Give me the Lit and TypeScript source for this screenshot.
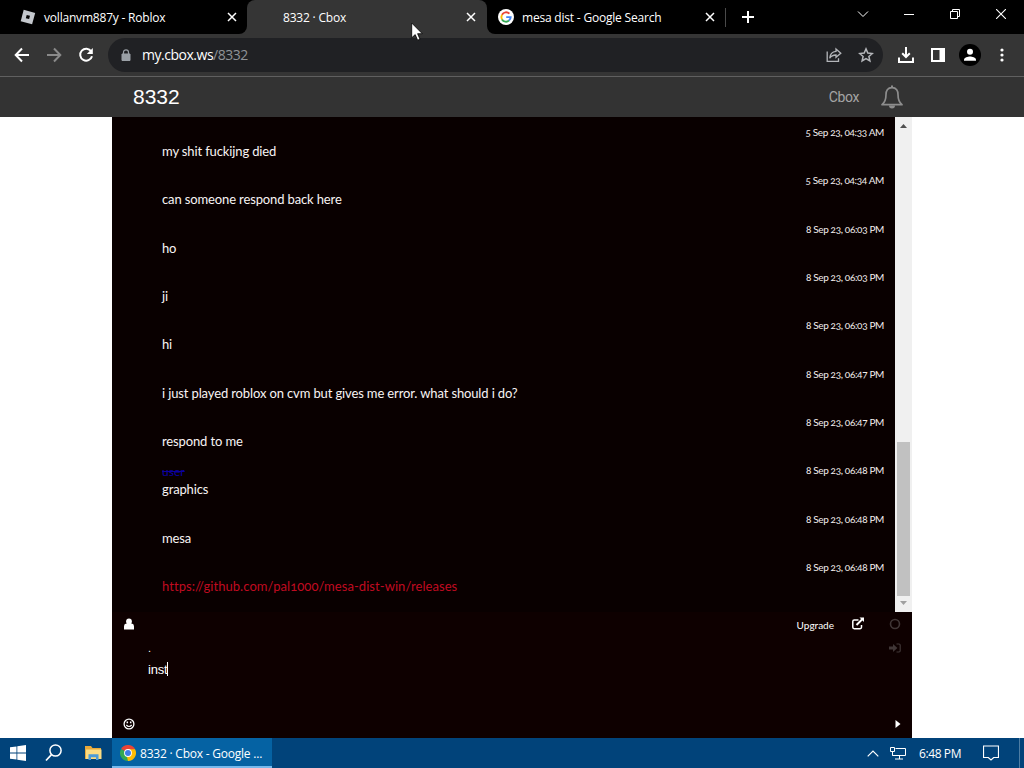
import { LitElement, html, svg, css } from 'lit';

type MessageType = {
  date: string
  text: string
  name?: string
  link?: boolean
}

const messages: MessageType[] = [
  { date: '5 Sep 23, 04:33 AM', text: 'my shit fuckijng died' },
  { date: '5 Sep 23, 04:34 AM', text: 'can someone respond back here' },
  { date: '8 Sep 23, 06:03 PM', text: 'ho' },
  { date: '8 Sep 23, 06:03 PM', text: 'ji' },
  { date: '8 Sep 23, 06:03 PM', text: 'hi' },
  { date: '8 Sep 23, 06:47 PM', text: 'i just played roblox on cvm but gives me error. what should i do?' },
  { date: '8 Sep 23, 06:47 PM', text: 'respond to me' },
  { date: '8 Sep 23, 06:48 PM', text: 'graphics', name: 'user' },
  { date: '8 Sep 23, 06:48 PM', text: 'mesa' },
  { date: '8 Sep 23, 06:48 PM', text: 'https://github.com/pal1000/mesa-dist-win/releases', link: true },
]

const icon = (w: number, h: number, body: any) => html`
  <svg width="${w}" height="${h}" viewBox="0 0 ${w} ${h}" fill="none" stroke="currentColor">${body}</svg>`

const icons = {
  close: () => icon(10, 10, svg`<path d="M1 1l8 8M9 1l-8 8" stroke-width="1.5"/>`),
  plus: () => icon(12, 12, svg`<path d="M6 0v12M0 6h12" stroke-width="2"/>`),
  chevron: () => icon(12, 8, svg`<path d="M1 1.5l5 5 5-5"/>`),
  minimize: () => icon(10, 10, svg`<path d="M0 5.5h10"/>`),
  restore: () => icon(10, 10, svg`<path d="M.5 2.5h7v7h-7zM2.5 2.5v-2h7v7h-2"/>`),
  exit: () => icon(10, 10, svg`<path d="M0 0l10 10M10 0L0 10" stroke-width="1.1"/>`),
  roblox: () => icon(16, 16, svg`
    <path d="M3.7 .8L15.2 3.9 12.1 15.3 .7 12.2z" fill="#c4c8cd" stroke="none"/>
    <path d="M6.7 5.9l3.3.9-.9 3.3-3.3-.9z" fill="#050505" stroke="none"/>`),
  google: () => icon(16, 16, svg`
    <circle cx="8" cy="8" r="8" fill="#fff" stroke="none"/>
    <path d="M4 5.7A4.7 4.7 0 0 1 11.4 4.7" stroke="#ea4335" stroke-width="1.9"/>
    <path d="M4 5.7A4.7 4.7 0 0 0 4 10.4" stroke="#fbbc05" stroke-width="1.9"/>
    <path d="M4 10.4A4.7 4.7 0 0 0 11 11.6" stroke="#34a853" stroke-width="1.9"/>
    <path d="M8.2 8.1h4.5A4.7 4.7 0 0 1 11 11.6" stroke="#4285f4" stroke-width="1.9"/>`),
  back: () => icon(16, 16, svg`<path d="M15 8H2M8 1.5L1.7 8 8 14.5" stroke-width="2"/>`),
  forward: () => icon(16, 16, svg`<path d="M1 8h13M8 1.5L14.3 8 8 14.5" stroke-width="2"/>`),
  reload: () => icon(16, 16, svg`
    <path d="M13.2 4.3A6 6 0 1 0 14 9.2" stroke-width="2"/>
    <path d="M14.8 1v6H8.8z" fill="currentColor" stroke="none"/>`),
  lock: () => icon(10, 12, svg`
    <path d="M1 5h8v6.5H1z" fill="currentColor"/>
    <path d="M2.5 5V3.3a2.5 2.5 0 0 1 5 0V5" stroke-width="1.2"/>`),
  share: () => icon(16, 16, svg`
    <path d="M1.2 4.5v9.8h11.3v-3" stroke-width="1.3"/>
    <path d="M10 2l4.8 4.2L10 10.3V8C7 8 5 9 3.7 11.2 4 7.5 6 4.7 10 4.3z" stroke-width="1.3"/>`),
  star: () => icon(16, 16, svg`<path d="M8 1.9l1.8 4.2 4.6.4-3.5 3 1 4.5L8 11.6 4.1 14l1-4.5-3.5-3 4.6-.4z" stroke-width="1.5"/>`),
  download: () => icon(16, 16, svg`
    <path d="M8 0v10M4.2 6.2L8 10l3.8-3.8" stroke-width="2"/>
    <path d="M1 10.5V15h14v-4.5" stroke-width="2"/>`),
  panel: () => icon(14, 14, svg`
    <path d="M1 1h12v12H1z" stroke-width="2"/>
    <path d="M8.5 0H14v14H8.5z" fill="currentColor" stroke="none"/>`),
  avatar: () => icon(22, 22, svg`
    <circle cx="11" cy="11" r="11" fill="#000" stroke="none"/>
    <circle cx="11" cy="7.8" r="3" fill="#fff" stroke="none"/>
    <path d="M5 16.8v-1.3c0-2 4-3.1 6-3.1s6 1.1 6 3.1v1.3z" fill="#fff" stroke="none"/>`),
  dots: () => icon(4, 14, svg`
    <g fill="currentColor" stroke="none"><circle cx="2" cy="2" r="1.6"/><circle cx="2" cy="7" r="1.6"/><circle cx="2" cy="12" r="1.6"/></g>`),
  bell: () => icon(24, 24, svg`
    <path d="M12 2.6C7.5 2.6 6 6 6 9.5c0 5-1.2 8-4 10.2h20c-2.8-2.2-4-5.2-4-10.2C18 6 16.5 2.6 12 2.6z" stroke-width="1.7" stroke-linejoin="round"/>
    <path d="M12 .5v2" stroke-width="2"/>
    <path d="M9 20.5a3 3 0 0 0 6 0z" fill="currentColor" stroke="none"/>`),
  user: () => icon(12, 12, svg`
    <path d="M1 11.5V8.2Q1 5.8 3.4 5.6h5.2Q11 5.8 11 8.2v3.3z" fill="currentColor" stroke="none"/>
    <circle cx="6" cy="3.4" r="2.9" fill="currentColor" stroke="none"/>`),
  external: () => icon(14, 13, svg`
    <path d="M7.5 3H3.2Q1.8 3 1.8 4.4v5.9q0 1.4 1.4 1.4h5.9q1.4 0 1.4-1.4V8" stroke-width="1.5"/>
    <path d="M5.5 8L11.5 2" stroke-width="1.9"/>
    <path d="M8.5 .5H13V5z" fill="currentColor" stroke="none"/>`),
  circle: () => icon(12, 12, svg`<circle cx="6" cy="6" r="4.5" stroke-width="1.6"/>`),
  enter: () => icon(12, 10, svg`
    <path d="M0 3.4h4V1l4.4 4L4 9V6.6H0z" fill="currentColor" stroke="none"/>
    <path d="M7.5 1H10q1.2 0 1.2 1.2v5.6Q11.2 9 10 9H7.5" stroke-width="1.2"/>`),
  smile: () => icon(12, 12, svg`
    <circle cx="6" cy="6" r="4.9" stroke-width="1.3"/>
    <path d="M3.3 7q2.7 3 5.4 0" stroke-width="1.2"/>
    <path d="M4.3 3.5v1.8M7.7 3.5v1.8" stroke-width="1.5"/>`),
  play: () => icon(6, 8, svg`<path d="M.5 0l5 4-5 4z" fill="currentColor" stroke="none"/>`),
  up: () => icon(7, 4, svg`<path d="M0 4l3.5-4L7 4z" fill="currentColor" stroke="none"/>`),
  down: () => icon(7, 4, svg`<path d="M0 0l3.5 4L7 0z" fill="currentColor" stroke="none"/>`),
  windows: () => icon(16, 16, svg`
    <path d="M0 2.3l6.5-.9v6.1H0zM7.3 1.3L16 0v7.5H7.3zM0 8.4h6.5v6.2L0 13.7zM7.3 8.4H16V16l-8.7-1.2z" fill="currentColor" stroke="none"/>`),
  search: () => icon(18, 18, svg`
    <circle cx="10.5" cy="6.5" r="5.6" stroke-width="1.5"/>
    <path d="M6.5 10.7L1 16.5" stroke-width="1.7"/>`),
  explorer: () => icon(17, 14, svg`
    <g stroke="none">
      <path d="M0 0h6l1.5 2H16v11H0z" fill="#e9a93a"/>
      <path d="M1 3.5h15.5V13H1z" fill="#fbdc82"/>
      <path d="M3.5 14V8.3h10V14H11v-2.8H6V14z" fill="#4b9bd8"/>
    </g>`),
  chrome: () => icon(16, 16, svg`
    <g stroke="none">
      <path d="M8 8L1.07 4A8 8 0 0 1 14.93 4z" fill="#ea4335"/>
      <path d="M8 8L14.93 4A8 8 0 0 1 8 16z" fill="#fbbc05"/>
      <path d="M8 8V16A8 8 0 0 1 1.07 4z" fill="#34a853"/>
      <path d="M8 4.3h6.93L11.3 9.8zM11.3 9.8L8 16l-1-4z" fill="#fbbc05"/>
      <circle cx="8" cy="8" r="3.9" fill="#fff"/>
      <circle cx="8" cy="8" r="3" fill="#3f7de8"/>
    </g>`),
  trayUp: () => icon(12, 7, svg`<path d="M.7 6.3L6 1l5.3 5.3" stroke-width="1.2"/>`),
  network: () => icon(16, 13, svg`
    <path d="M5.5 1.5h10v7H2.5v-3M9.5 8.5v3.5M5 12h8"/>
    <path d="M.5.5h4v4h-4zM2.5 4.5v4"/>`),
  note: () => icon(16, 16, svg`<path d="M.5 1h15v11.5h-4.8L8 15l-2.7-2.500H.5z" stroke-width="1.2"/>`),
  cursor: () => icon(12, 19, svg`<path d="M.7 1v14.8l3.5-3.2 2.4 5.6 2.4-1-2.4-5.5h4.7z" fill="#fff" stroke="#000" stroke-width=".8"/>`),
}

export class ChatMessage extends LitElement {

  static get styles() {
    return css`

    :host {
      display: block;
      height: 48.35px;
      font-family: Lato, "Liberation Sans", sans-serif;
      font-feature-settings: "onum";
    }

    .meta {
      display: flex;
      justify-content: space-between;
      height: 18px;
      line-height: 18px;
      color: #f3eeee;
    }

    .name {
      padding-top: 2px;
      font-size: 12px;
      color: #0b00a0;
      text-decoration: line-through;
    }

    .date {
      font-size: 10px;
      letter-spacing: -0.35px;
      margin-left: auto;
    }

    .text {
      height: 20px;
      line-height: 20px;
      font-size: 13px;
      letter-spacing: -0.13px;
      color: #f8f4f4;
    }

    .link {
      color: #c00b20;
      letter-spacing: 0.06px;
    }

    `;
  }

  static get properties() {
    return {
      message: { type: Object },
    };
  }

  declare message: MessageType

  render() {
    const { name, date, text, link } = this.message
    return html`
      <div class="meta">
        ${name ? html`<span class="name">${name}</span>` : ''}
        <span class="date">${date}</span>
      </div>
      <div class="text ${link ? 'link' : ''}"><span>${text}</span></div>
    `
  }
}

customElements.define('chat-message', ChatMessage);

export class AppRoot extends LitElement {

  static get styles() {
    return css`

    :host {
      display: flex;
      flex-direction: column;
      width: 1024px;
      height: 768px;
      overflow: hidden;
      background: white;
      color: white;
      font-family: "Open Sans", "Noto Sans", sans-serif;
      font-size: 12px;
      white-space: nowrap;
    }
    :host * {
      box-sizing: border-box;
    }

    svg {
      display: block;
      flex: none;
    }

    .tabs {
      display: flex;
      height: 34px;
      background: #353535;
    }

    .tab {
      display: flex;
      align-items: center;
      gap: 8px;
      width: 240px;
      padding: 0 12px 0 11px;
    }

    .tab .title {
      flex: 1;
      letter-spacing: -0.2px;
    }

    .tab svg:last-child {
      margin-right: -1px;
    }

    .first {
      width: 247px;
      padding: 0 11px 0 20px;
      background: black;
      border-bottom-right-radius: 8px;
    }

    .activewrap {
      background: black;
      height: 17px;
      width: 240px;
    }

    .active {
      height: 34px;
      padding-left: 36px;
      background: #353535;
      border-radius: 8px 8px 0 0;
    }

    .rest {
      flex: 1;
      display: flex;
      background: black;
      border-bottom-left-radius: 8px;
    }

    .rest .tab {
      padding-right: 13px;
    }

    .newtab {
      display: flex;
      align-items: center;
      height: 34px;
      width: 115px;
      margin-left: -2px;
    }

    .newtab::before {
      content: '';
      width: 1px;
      height: 19px;
      margin-right: 16px;
      background: #4a4a4a;
    }

    .control {
      display: flex;
      align-items: center;
      justify-content: center;
      flex: none;
      width: 46px;
      height: 28px;
    }

    .rest {
      width: 537px;
    }

    .toolbar {
      display: flex;
      align-items: center;
      height: 43px;
      padding: 0 6px;
      background: #353535;
      border-bottom: 1px solid #606060;
    }

    .tool {
      display: flex;
      align-items: center;
      justify-content: center;
      width: 32px;
      height: 34px;
    }

    .dim {
      color: #8a8a8a;
    }

    .address {
      display: flex;
      align-items: center;
      width: 775px;
      height: 34px;
      margin: 0 7px 0 6px;
      padding: 0 1px 0 13px;
      border-radius: 17px;
      background: #202124;
      color: #b4b6ba;
    }

    .lock {
      color: #9aa0a6;
    }

    .url {
      flex: 1;
      margin: -1px 0 0 11px;
      font-size: 14px;
      color: #8f9297;
      letter-spacing: -0.48px;
    }

    .url b {
      font-weight: 400;
      color: white;
    }

    .header {
      display: flex;
      align-items: center;
      height: 40px;
      padding: 0 120px 0 133px;
      background: #333;
      color: #a5a5a5;
      font-family: Roboto, "Liberation Sans", sans-serif;
      font-size: 14px;
    }

    .title8332 {
      flex: 1;
      font-family: "Liberation Sans", sans-serif;
      font-size: 21px;
      color: white;
    }

    .cbox {
      letter-spacing: -0.35px;
    }

    .bell {
      margin-left: 21px;
      color: #8d8d8d;
    }

    .chat {
      display: flex;
      flex-direction: column;
      width: 800px;
      height: 621px;
      margin-left: 112px;
      background: #0e0000;
      font-family: Lato, "Liberation Sans", sans-serif;
    }

    .log {
      display: flex;
      height: 495px;
      background: #090000;
    }

    .messages {
      flex: 1;
      padding: 6px 11px 0 50px;
    }

    .scrollbar {
      display: flex;
      flex-direction: column;
      align-items: center;
      justify-content: space-between;
      width: 17px;
      padding: 7px 0;
      background: #f0f0f0;
      color: #505050;
    }

    .thumb {
      width: 13px;
      height: 154px;
      margin: auto 0 5px;
      background: #c1c1c1;
    }

    .scrollbar .down {
      color: #a0a0a0;
    }

    .form {
      flex: 1;
      display: flex;
      justify-content: space-between;
      padding: 6px 11px 8px;
    }

    .side {
      display: flex;
      flex-direction: column;
      justify-content: space-between;
      width: 25px;
    }

    .input {
      flex: 1;
      font-family: "Liberation Sans", sans-serif;
      font-size: 13px;
      padding-top: 21px;
    }

    .nick {
      height: 20px;
      line-height: 16px;
      font-size: 11px;
      padding-top: 1px;
    }

    .draft {
      display: flex;
      align-items: center;
      height: 20px;
      letter-spacing: -0.2px;
    }

    .caret {
      width: 1px;
      height: 14px;
      background: white;
    }

    .actions {
      display: flex;
      align-items: flex-start;
      font-size: 10px;
      line-height: 14px;
    }

    .actions .external {
      margin: -1px 24px 0 17px;
    }

    .last {
      display: flex;
      flex-direction: column;
      height: 100%;
      align-items: center;
      gap: 13px;
      color: #403636;
    }

    .send {
      margin-top: auto;
      padding: 0 0 2px 6px;
      color: white;
    }

    .taskbar {
      display: flex;
      align-items: center;
      height: 30px;
      background: #01437a;
    }

    .pin {
      display: flex;
      align-items: center;
      justify-content: center;
      width: 36px;
    }

    .pin:nth-child(3) {
      width: 40px;
      padding-left: 2px;
    }

    .task {
      display: flex;
      align-items: center;
      gap: 4px;
      width: 160px;
      height: 30px;
      padding: 2px 8px 0;
      background: #0562a3;
      border-bottom: 2px solid #76b9ed;
      letter-spacing: -0.22px;
    }

    .tray {
      display: flex;
      align-items: center;
      height: 30px;
      margin-left: auto;
    }

    .network {
      margin-left: 11px;
    }

    .clock {
      width: 42px;
      margin: 0 22px 0 13px;
      letter-spacing: -0.4px;
    }

    .desktop {
      width: 5px;
      height: 30px;
      margin-left: 20px;
      border-left: 1px solid #4e7da3;
    }

    .cursor {
      position: absolute;
      left: 411px;
      top: 22px;
    }

    `;
  }

  render() {
    return html`
      <div class="tabs">
        <div class="tab first">${icons.roblox()}<span class="title">vollanvm887y - Roblox</span>${icons.close()}</div>
        <div class="activewrap">
          <div class="tab active"><span class="title">8332 · Cbox</span>${icons.close()}</div>
        </div>
        <div class="rest">
          <div class="tab">${icons.google()}<span class="title">mesa dist - Google Search</span>${icons.close()}</div>
          <div class="newtab">${icons.plus()}</div>
          ${[icons.chevron, icons.minimize, icons.restore, icons.exit].map(i => html`<div class="control">${i()}</div>`)}
        </div>
      </div>

      <div class="toolbar">
        <div class="tool">${icons.back()}</div>
        <div class="tool dim">${icons.forward()}</div>
        <div class="tool">${icons.reload()}</div>
        <div class="address">
          <span class="lock">${icons.lock()}</span>
          <span class="url"><b>my.cbox.ws</b>/8332</span>
          <div class="tool">${icons.share()}</div>
          <div class="tool">${icons.star()}</div>
        </div>
        ${[icons.download, icons.panel, icons.avatar, icons.dots].map(i => html`<div class="tool">${i()}</div>`)}
      </div>

      <div class="header">
        <span class="title8332">8332</span>
        <span class="cbox">Cbox</span>
        <span class="bell">${icons.bell()}</span>
      </div>

      <div class="chat">
        <div class="log">
          <div class="messages">
            ${messages.map(m => html`<chat-message .message=${m}></chat-message>`)}
          </div>
          <div class="scrollbar">
            ${icons.up()}
            <div class="thumb"></div>
            <span class="down">${icons.down()}</span>
          </div>
        </div>
        <div class="form">
          <div class="side">${icons.user()}${icons.smile()}</div>
          <div class="input">
            <div class="nick">.</div>
            <div class="draft">inst<span class="caret"></span></div>
          </div>
          <div class="actions">
            <span>Upgrade</span>
            <span class="external">${icons.external()}</span>
            <div class="last">
              ${icons.circle()}
              ${icons.enter()}
              <span class="send">${icons.play()}</span>
            </div>
          </div>
        </div>
      </div>

      <div class="taskbar">
        <div class="pin">${icons.windows()}</div>
        <div class="pin">${icons.search()}</div>
        <div class="pin">${icons.explorer()}</div>
        <div class="task">${icons.chrome()}<span>8332 · Cbox - Google ...</span></div>
        <div class="tray">
          ${icons.trayUp()}
          <span class="network">${icons.network()}</span>
          <span class="clock">6:48 PM</span>
          ${icons.note()}
          <div class="desktop"></div>
        </div>
      </div>

      <div class="cursor">${icons.cursor()}</div>
    `
  }
}

customElements.define('app-root', AppRoot);
